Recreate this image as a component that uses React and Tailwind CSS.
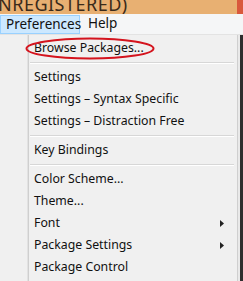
import React from "react";

const Sep = () => (
  <div className="h-[7px] flex items-center pl-[1px] pr-[3px]">
    <div className="w-full border-t border-[#d7d7d7] border-b border-b-white" />
  </div>
);

const Item = ({ label, sub }) => (
  <div className="h-[22px] flex items-center pl-[5px] pr-[12px] justify-between">
    <span>{label}</span>
    {sub && (
      <svg width="4" height="7" viewBox="0 0 4 7" className="mr-[1px]">
        <path d="M0 0 L4 3.5 L0 7 Z" fill="#222" />
      </svg>
    )}
  </div>
);

export default function App() {
  return (
    <div
      className="relative w-[243px] h-[281px] overflow-hidden bg-[#f0f0f0] text-[12.3px] text-[#111]"
      style={{ fontFamily: '"Noto Sans", "Microsoft YaHei", sans-serif' }}
    >
      {/* title bar */}
      <div className="h-[14px] bg-[#e8b072] relative overflow-hidden">
        <span className="absolute left-[-2px] top-[-4px] h-[16px] text-[18px] leading-[16px] text-[#3a2a1a] tracking-[0.5px] whitespace-nowrap">
          NREGISTERED)
        </span>
        <div className="absolute right-0 top-0 w-[6px] h-[14px] bg-[#d9583c]" />
      </div>
      {/* menu bar */}
      <div className="h-[21px] bg-[#f5f6f7] flex items-stretch border-b border-[#e3e3e3] text-[13.5px] leading-none">
        <div className="w-[80px] shrink-0 bg-[#cce8ff] border border-[#99d1ff] flex items-center pl-[5px] mt-[1px] whitespace-nowrap">
          Preferences
        </div>
        <div className="flex items-center pl-[8px]">Help</div>
      </div>
      {/* body */}
      <div className="flex h-full">
        <div className="w-[28px] shrink-0 bg-[#f0f0f0] border-r border-[#e2e2e2]" />
        <div className="w-[210px] shrink-0 bg-[#f0f0f0] border-l border-[#cfcfcf] border-r border-[#c8c8c8] pt-[2px]">
          <Item label="Browse Packages..." />
          <Sep />
          <Item label="Settings" />
          <Item label="Settings – Syntax Specific" />
          <Item label="Settings – Distraction Free" />
          <Sep />
          <Item label="Key Bindings" />
          <Sep />
          <Item label="Color Scheme..." />
          <Item label="Theme..." />
          <Item label="Font" sub />
          <Item label="Package Settings" sub />
          <Item label="Package Control" />
        </div>
        <div className="w-[2px] bg-[#e9e9e9]" />
        <div className="flex-1 bg-[#2e2e2e]" />
      </div>
      {/* red annotation ellipse */}
      <svg className="absolute left-[24px] top-[36px]" width="132" height="26" viewBox="0 0 132 26">
        <ellipse cx="66" cy="12.5" rx="63.5" ry="10" fill="none" stroke="#d4141e" strokeWidth="2" />
      </svg>
    </div>
  );
}
